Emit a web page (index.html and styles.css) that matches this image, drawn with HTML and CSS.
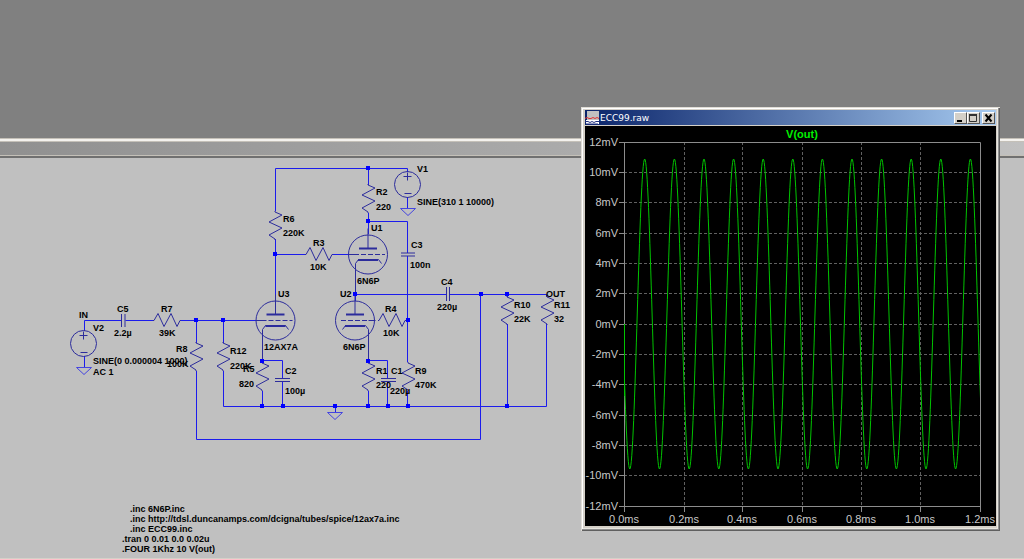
FILE: index.html
```html
<!DOCTYPE html>
<html lang="en">
<head>
<meta charset="utf-8">
<title>ECC99</title>
<link rel="stylesheet" href="styles.css">
</head>
<body>
<div class="backdrop"></div>
<div class="caption-bar"></div>
<main class="sheet">
<svg class="schematic" width="580" height="401" viewBox="0 158 580 401" role="img" aria-label="Amplifier schematic">
  <defs>
    <path id="res" d="M0 0v1l7 3-13 7 13 6-13 7 6 4v1"/>
    <path id="resh" d="M0 0h1l4-7 6 13 7-13 6 13 3-6h1"/>
    <g id="tube"><circle r="19.5"/><path d="M0-26v20"/><path class="plate" d="M-9-6H9"/><path d="M-14 0h5m2 0h5m2 0h5m2 0h5m2 0h3"/><path class="plate" d="M-10 5.500h20"/></g>
    <path id="cathode-l" d="M13 9l-3-4h-20l-3 4v31M-20 0h7"/>
    <path id="cathode-r" d="M-13 9l3-4h20l3 4v31M20 0h-7"/>
    <g id="source"><circle r="13"/><path d="M-4-8h8M0-12v8M-3 9h7"/></g>
    <path id="gnd" d="M-7.500 0h15l-7.500 7z"/>
    <path id="dot" d="M-2 -2h4v4h-4z"/>
  </defs>
  <g class="wires">
    <path d="M275.500 211V168.500H407.500V172M368.500 168v17M368.500 213v21M368 221.500h39.500V253M407.500 256V362M275.500 239v62M275.500 254.500h30M332 254.500h17M355.500 265v36M355 294.500h91M450 294.500h96.500V297M507.500 294v3M507.500 324v82M546.500 324v82.500H223.500V371M84.500 331v-10.500h37M125.500 320.500h28M180 320.500h77M196.500 320v23M196.500 371v68.500h284V294M223.500 320v23M262.500 350v13M262.500 391v15M262.500 360.500h20V378M282.500 382v24M368.500 350v13M368.500 391v15M368 360.500h19.500V378M387.500 382v24M407.500 391v15M335.500 406v6M84.500 356v11M407.500 197v11"/>
  </g>
  <g class="parts">
    <use href="#res" x="368" y="184"/><use href="#res" x="275" y="211"/><use href="#res" x="196" y="342"/><use href="#res" x="223" y="342"/><use href="#res" x="262" y="362"/><use href="#res" x="368" y="362"/><use href="#res" x="408" y="362"/><use href="#res" x="507" y="296"/><use href="#res" x="547" y="296"/>
    <use href="#resh" x="305" y="254.500"/><use href="#resh" x="153" y="320.500"/><use href="#resh" x="378" y="320.500"/>
    <use href="#tube" x="368" y="254.500"/><use href="#cathode-l" x="368.500" y="254.500"/>
    <use href="#tube" x="355" y="320.500"/><use href="#cathode-r" x="355.500" y="320.500"/>
    <use href="#tube" x="275.500" y="320.500"/><use href="#cathode-l" x="275.500" y="320.500"/>
    <use href="#source" x="407.500" y="184.500"/><use href="#source" x="83.500" y="343.500"/>
    <path d="M401 253h14M401 256h14M446.500 287v14M449.500 287v14M121.500 314v13M125 314v13M275 378.500h15M275 381.500h15M381 378.500h15M381 381.500h15"/>
  </g>
  <g class="grounds"><use href="#gnd" x="408" y="208.500"/><use href="#gnd" x="84" y="367.500"/><use href="#gnd" x="335" y="412.500"/></g>
  <g class="dots">
    <use href="#dot" x="368" y="168"/><use href="#dot" x="368" y="221"/><use href="#dot" x="275" y="254"/><use href="#dot" x="355" y="294"/><use href="#dot" x="481" y="294"/><use href="#dot" x="507" y="294"/><use href="#dot" x="408" y="320"/><use href="#dot" x="196" y="320"/><use href="#dot" x="223" y="320"/><use href="#dot" x="262" y="361"/><use href="#dot" x="368" y="361"/><use href="#dot" x="262" y="406"/><use href="#dot" x="283" y="406"/><use href="#dot" x="335" y="406"/><use href="#dot" x="368" y="406"/><use href="#dot" x="388" y="406"/><use href="#dot" x="408" y="406"/><use href="#dot" x="507" y="406"/>
  </g>
  <g class="labels">
    <text x="417" y="172">V1</text><text x="417" y="205">SINE(310 1 10000)</text>
    <text x="376" y="195">R2</text><text x="376" y="210">220</text>
    <text x="283" y="222">R6</text><text x="283" y="236">220K</text>
    <text x="313" y="246">R3</text><text x="310" y="270">10K</text>
    <text x="371" y="231">U1</text><text x="357" y="284">6N6P</text>
    <text x="411" y="248">C3</text><text x="410" y="268">100n</text>
    <text x="278" y="297">U3</text><text x="264" y="350">12AX7A</text>
    <text x="340" y="297">U2</text><text x="343" y="350">6N6P</text>
    <text x="385" y="312">R4</text><text x="383" y="336">10K</text>
    <text x="441" y="285">C4</text><text x="437" y="310">220µ</text>
    <text x="546" y="297">OUT</text><text x="514" y="308">R10</text><text x="514" y="322">22K</text>
    <text x="554" y="308">R11</text><text x="554" y="322">32</text>
    <text x="79" y="318">IN</text><text x="93" y="331">V2</text>
    <text x="93" y="364">SINE(0 0.000004 1000)</text><text x="93" y="375">AC 1</text>
    <text x="117" y="312">C5</text><text x="114" y="336">2.2µ</text>
    <text x="161" y="312">R7</text><text x="159" y="336">39K</text>
    <text x="176" y="352">R8</text><text x="167" y="367">100K</text>
    <text x="230" y="354">R12</text><text x="230" y="369">220K</text>
    <text x="243" y="372">R5</text><text x="239" y="387">820</text>
    <text x="285" y="374">C2</text><text x="285" y="394">100µ</text>
    <text x="376" y="374">R1</text><text x="376" y="388">220</text>
    <text x="391" y="374">C1</text><text x="390" y="394">220µ</text>
    <text x="415" y="374">R9</text><text x="415" y="388">470K</text>
    <text x="130" y="512">.inc 6N6P.inc</text>
    <text x="130" y="522">.inc http://tdsl.duncanamps.com/dcigna/tubes/spice/12ax7a.inc</text>
    <text x="130" y="532">.inc ECC99.inc</text>
    <text x="122" y="542">.tran 0 0.01 0.0 0.02u</text>
    <text x="122" y="552">.FOUR 1Khz 10 V(out)</text>
  </g>
</svg>
</main>
<section class="window">
  <header class="titlebar">
    <svg class="app-icon" width="14" height="14" viewBox="0 0 14 14" aria-hidden="true"><path fill="#c0c0c0" d="M2 0h12v13H2z"/><path stroke="#e03030" fill="none" d="M0 7.500l2-1 2 1h2l2-1 2 1 2-1 2 1"/><path fill="#fff" d="M1 9h13v4H1z"/><path stroke="#203080" fill="none" d="M0 10.500h3l2 1 2-1 2 1 2-1h3M1 13h12"/></svg>
    <h1 class="title">ECC99.raw</h1>
    <button class="control" aria-label="Minimize"><svg width="11" height="10"><path d="M2 8h5" stroke="#000" stroke-width="2"/></svg></button>
    <button class="control" aria-label="Maximize"><svg width="11" height="10"><path d="M1.500 2v6.500h7V1M1 1.500h8" stroke="#333" fill="none"/><path d="M1 2h8" stroke="#333" stroke-width="2"/></svg></button>
    <button class="control close" aria-label="Close"><svg width="11" height="10"><path d="M2.500 1.500l6 7M8.500 1.500l-6 7" stroke="#000" stroke-width="2"/></svg></button>
  </header>
  <svg class="plot" width="411" height="400" viewBox="585 126 411 400" role="img" aria-label="V(out) waveform">
    <path class="grid" d="M624 172.500H980M624 202.500H980M624 233.500H980M624 263.500H980M624 293.500H980M624 324.500H980M624 354.500H980M624 384.500H980M624 415.500H980M624 445.500H980M624 475.500H980M684.500 142V506M742.500 142V506M802.500 142V506M861.500 142V506M920.500 142V506"/>
    <path class="axis" d="M619 142.500H980.500V512M619 506.500H980M624.500 142V512M619 172.500h5M619 202.500h5M619 233.500h5M619 263.500h5M619 293.500h5M619 324.500h5M619 354.500h5M619 384.500h5M619 415.500h5M619 445.500h5M619 475.500h5M684.500 506v6M742.500 506v6M802.500 506v6M861.500 506v6M920.500 506v6"/>
    <path class="trace" d="M624.500 324V396"/>
    <svg x="624" y="142" width="356" height="364" viewBox="624 142 356 364">
      <path class="trace" d="M615 159c5.400 0 9.400 310 14.800 310s9.500-310 14.900-310 9.400 310 14.800 310 9.500-310 14.900-310 9.400 310 14.800 310 9.400-310 14.800-310 9.400 310 14.800 310 9.400-310 14.800-310 9.400 310 14.800 310 9.400-310 14.800-310 9.400 310 14.800 310 9.400-310 14.800-310 9.400 310 14.800 310 9.400-310 14.800-310 9.400 310 14.800 310 9.400-310 14.800-310 9.400 310 14.800 310 9.400-310 14.800-310 9.400 310 14.800 310 9.400-310 14.800-310 9.400 310 14.800 310 9.400-310 14.800-310 9.400 310 14.800 310 9.400-310 14.800-310 9.400 310 14.800 310"/>
    </svg>
    <text class="trace-name" x="802" y="138">V(out)</text>
    <g class="ylabels"><text x="618" y="146">12mV</text><text x="618" y="176">10mV</text><text x="618" y="206">8mV</text><text x="618" y="237">6mV</text><text x="618" y="267">4mV</text><text x="618" y="297">2mV</text><text x="618" y="328">0mV</text><text x="618" y="358">-2mV</text><text x="618" y="388">-4mV</text><text x="618" y="419">-6mV</text><text x="618" y="449">-8mV</text><text x="618" y="479">-10mV</text><text x="618" y="510">-12mV</text></g>
    <g class="xlabels"><text x="624" y="523">0.0ms</text><text x="684" y="523">0.2ms</text><text x="742" y="523">0.4ms</text><text x="802" y="523">0.6ms</text><text x="861" y="523">0.8ms</text><text x="920" y="523">1.0ms</text><text x="980" y="523">1.2ms</text></g>
  </svg>
</section>
</body>
</html>
```
FILE: styles.css
```css
* { box-sizing: border-box; }
body {
  margin: 0;
  min-height: 100vh;
  display: flex;
  flex-direction: column;
  position: relative;
  background: #c0c0c0;
  font-family: "Liberation Sans", Arial, sans-serif;
}
.backdrop { height: 138px; background: #808080; }
.caption-bar {
  height: 20px;
  border-top: 1px solid #c4c0b8;
  border-bottom: 2px solid #707070;
  background: linear-gradient(to right, #909090, #c0c0c0);
  box-shadow: inset 0 2px #f4f2ee, inset 0 3px #c4c0b8, inset 0 -1px #c4c0b8;
}
.sheet { flex: 1; border-bottom: 1px solid #d4d0c8; overflow: hidden; }
.schematic, .plot { display: block; }
.schematic { margin-bottom: -1px; }
.wires { fill: none; stroke: #1c1cec; }
.parts { fill: none; stroke: #2c2c9c; }
.grounds { fill: none; stroke: #4444e0; }
.dots { fill: #0000ff; }
.plate { stroke-width: 2; }
.labels { font-size: 9px; font-weight: bold; fill: #000; }
.window {
  position: absolute;
  left: 581px;
  top: 107px;
  padding: 3px 4px 5px;
  background: #d4d0c8;
  box-shadow: inset 1px 1px #e0ddd6, inset -1px -1px #606060, inset -2px -2px #909090, inset 2px 2px #fff, inset -3px -3px #e8e6e0;
}
.titlebar {
  height: 15px;
  margin-bottom: 1px;
  padding-right: 1px;
  display: flex;
  align-items: center;
  background: linear-gradient(to right, #0a246a, #a6caf0);
}
.title { flex: 1; margin: 0 0 0 1px; padding-top: 1px; color: #fff; font: 9px "DejaVu Sans", sans-serif; }
.control {
  width: 13px;
  height: 12px;
  padding: 0;
  display: grid;
  place-items: center;
  border: 1px solid;
  border-color: #fff #555 #555 #fff;
  background: #d4d0c8;
}
.close { margin-left: 2px; }
.plot { background: #000; }
.grid { fill: none; stroke: #606060; stroke-dasharray: 3 2; }
.axis { fill: none; stroke: #8c8c8c; }
.trace { fill: none; stroke: #00c400; }
.trace-name { fill: #00f000; font-size: 11px; font-weight: bold; text-anchor: middle; }
.ylabels, .xlabels { fill: #c8c8c8; font-size: 11px; }
.ylabels { text-anchor: end; }
.xlabels { text-anchor: middle; }
```
